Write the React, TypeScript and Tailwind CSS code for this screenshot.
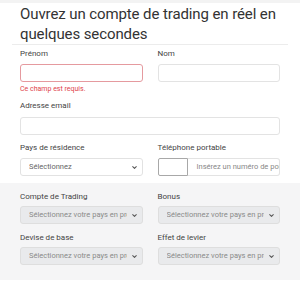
import { ChevronDown } from "lucide-react";

const font = { fontFamily: "Roboto, 'Liberation Sans', sans-serif" };

function Label({ children }: { children: React.ReactNode }) {
  return <div className="h-[10px] text-[8px] leading-[10px] whitespace-nowrap text-[#444]">{children}</div>;
}

function Select({ text, muted }: { text: string; muted?: boolean }) {
  return (
    <div
      className={`flex h-[18px] items-center rounded-[3px] border pl-[8px] pr-[4px] text-[7.5px] ${
        muted ? "border-[#dedede] bg-[#e9eaec] text-[#8a8a8a]" : "border-[#e2e2e2] bg-white text-[#666]"
      }`}
    >
      <span className="min-w-0 flex-1 overflow-hidden whitespace-nowrap">{text}</span>
      <ChevronDown className="ml-[4px] h-[7px] w-[7px] shrink-0 text-[#555]" strokeWidth={3.5} />
    </div>
  );
}

export default function App() {
  return (
    <div className="h-[283px] w-[300px] overflow-hidden bg-white" style={font}>
      <div className="h-[3px] bg-[#f3f3f3]" />
      <div className="px-[20px] pt-[1px]">
        <h1 className="text-[15px] leading-[20px] font-normal tracking-[-0.1px] text-[#333]">
          Ouvrez un compte de trading en réel en quelques secondes
        </h1>
      </div>
      <div className="mx-[12px] h-px bg-[#ececec]" />

      <div className="grid grid-cols-2 gap-x-[15px] px-[20px] pt-[4px]">
        <div>
          <Label>Prénom</Label>
          <div className="mt-[5px] h-[18px] rounded-[3px] border border-[#e59a9f] bg-white" />
          <div className="mt-[3px] text-[7px] leading-[9px] whitespace-nowrap text-[#e0434b]">Ce champ est requis.</div>
        </div>
        <div>
          <Label>Nom</Label>
          <div className="mt-[5px] h-[18px] rounded-[3px] border border-[#e3e3e3] bg-white" />
        </div>

        <div className="col-span-2 mt-[7px]">
          <Label>Adresse email</Label>
          <div className="mt-[6px] h-[18px] rounded-[3px] border border-[#e3e3e3] bg-white" />
        </div>

        <div className="mt-[8px]">
          <Label>Pays de résidence</Label>
          <div className="mt-[5px]">
            <Select text="Sélectionnez" />
          </div>
        </div>
        <div className="mt-[8px]">
          <Label>Téléphone portable</Label>
          <div className="mt-[5px] flex h-[18px]">
            <div className="w-[30px] rounded-l-[2px] border border-[#a8a8a8] bg-white" />
            <div className="flex min-w-0 flex-1 items-center overflow-hidden rounded-r-[3px] border border-l-0 border-[#e3e3e3] pl-[9px] text-[7.5px] whitespace-nowrap text-[#888]">
              Insérez un numéro de portable
            </div>
          </div>
        </div>
      </div>

      <div className="mt-[7px] grid grid-cols-2 gap-x-[15px] bg-[#f5f5f6] px-[20px] pt-[9px] pb-[15px]">
        <div>
          <Label>Compte de Trading</Label>
          <div className="mt-[4px]">
            <Select text="Sélectionnez votre pays en premier" muted />
          </div>
        </div>
        <div>
          <Label>Bonus</Label>
          <div className="mt-[4px]">
            <Select text="Sélectionnez votre pays en premier" muted />
          </div>
        </div>
        <div className="mt-[9px]">
          <Label>Devise de base</Label>
          <div className="mt-[4px]">
            <Select text="Sélectionnez votre pays en premier" muted />
          </div>
        </div>
        <div className="mt-[9px]">
          <Label>Effet de levier</Label>
          <div className="mt-[4px]">
            <Select text="Sélectionnez votre pays en premier" muted />
          </div>
        </div>
      </div>
    </div>
  );
}
